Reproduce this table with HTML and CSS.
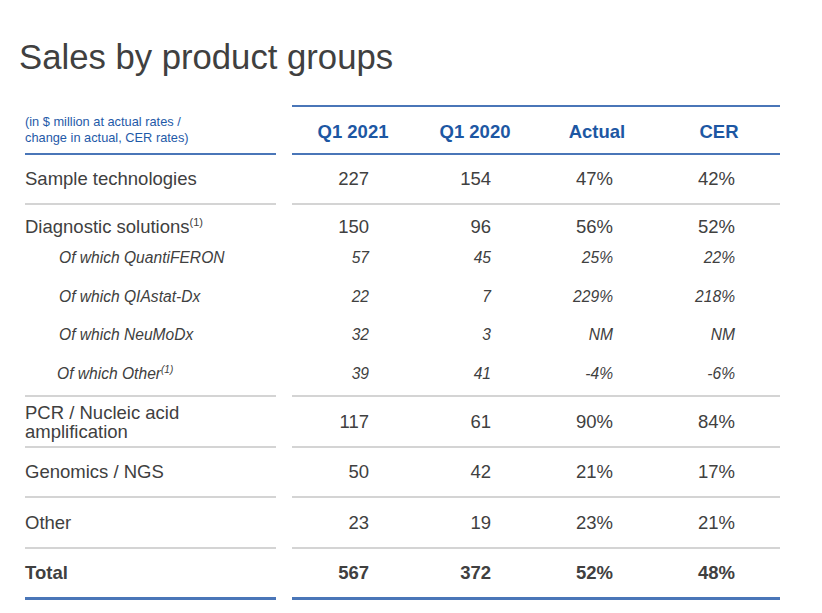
FILE: index.html
```html
<!DOCTYPE html>
<html lang="en">
<head>
<meta charset="utf-8">
<title>Sales by product groups</title>
<link rel="stylesheet" href="styles.css">
</head>
<body>
<div class="slide">
  <h1 class="title">Sales by product groups</h1>
  <div class="table">
    <div class="group head">
      <div class="left"><div class="note">(in $ million at actual rates /<br>change in actual, CER rates)</div></div>
      <div class="right">
        <div class="vals"><span>Q1 2021</span><span>Q1 2020</span><span>Actual</span><span>CER</span></div>
      </div>
    </div>

    <div class="group">
      <div class="left"><div class="line">Sample technologies</div></div>
      <div class="right"><div class="vals line"><span>227</span><span>154</span><span>47%</span><span>42%</span></div></div>
    </div>

    <div class="group diag">
      <div class="left">
        <div class="line main">Diagnostic solutions<sup>(1)</sup></div>
        <div class="line sub">Of which QuantiFERON</div>
        <div class="line sub">Of which QIAstat-Dx</div>
        <div class="line sub">Of which NeuMoDx</div>
        <div class="line sub other">Of which Other<sup>(1)</sup></div>
      </div>
      <div class="right">
        <div class="vals line main"><span>150</span><span>96</span><span>56%</span><span>52%</span></div>
        <div class="vals line sub"><span>57</span><span>45</span><span>25%</span><span>22%</span></div>
        <div class="vals line sub"><span>22</span><span>7</span><span>229%</span><span>218%</span></div>
        <div class="vals line sub"><span>32</span><span>3</span><span>NM</span><span>NM</span></div>
        <div class="vals line sub"><span>39</span><span>41</span><span>-4%</span><span>-6%</span></div>
      </div>
    </div>

    <div class="group tall">
      <div class="left"><div class="line two">PCR / Nucleic acid<br>amplification</div></div>
      <div class="right"><div class="vals line"><span>117</span><span>61</span><span>90%</span><span>84%</span></div></div>
    </div>

    <div class="group">
      <div class="left"><div class="line">Genomics / NGS</div></div>
      <div class="right"><div class="vals line"><span>50</span><span>42</span><span>21%</span><span>17%</span></div></div>
    </div>

    <div class="group tall">
      <div class="left"><div class="line">Other</div></div>
      <div class="right"><div class="vals line"><span>23</span><span>19</span><span>23%</span><span>21%</span></div></div>
    </div>

    <div class="group total">
      <div class="left"><div class="line">Total</div></div>
      <div class="right"><div class="vals line"><span>567</span><span>372</span><span>52%</span><span>48%</span></div></div>
    </div>
  </div>
</div>
</body>
</html>
```

FILE: styles.css
```css
html, body {
  margin: 0;
  padding: 0;
  background: #ffffff;
}

body {
  font-family: "Liberation Sans", Arial, sans-serif;
  color: #404040;
  width: 822px;
  height: 613px;
  overflow: hidden;
}

.slide {
  padding-top: 37px;
}

.title {
  margin: 0 0 28px 19px;
  font-size: 34.7px;
  line-height: 40px;
  font-weight: normal;
  color: #404040;
}

.table {
  margin-left: 25px;
}

.group {
  display: grid;
  grid-template-columns: 251px 488px;
  column-gap: 16px;
}

.left,
.right {
  display: flex;
  flex-direction: column;
  justify-content: center;
  border-bottom: 2px solid #d4d4d4;
  height: 48px;
}

.group.tall .left,
.group.tall .right {
  height: 49px;
}

.head .left,
.head .right {
  border-bottom: 2px solid #4a76b8;
  height: 46px;
}

.head .right {
  border-top: 2px solid #4a76b8;
}

.head .left {
  margin-top: 2px;
}

.note {
  font-size: 12.8px;
  line-height: 15.6px;
  color: #1f5aa8;
}

.vals {
  display: grid;
  grid-template-columns: repeat(4, 122px);
}

.head .vals span {
  text-align: center;
  font-weight: bold;
  font-size: 18.5px;
  color: #1d57a3;
  padding-top: 4px;
}

.line {
  font-size: 18.5px;
  line-height: 22px;
}

.line.two {
  line-height: 19px;
}

.vals.line span {
  text-align: right;
  padding-right: 45px;
}

sup {
  font-size: 11px;
  line-height: 0;
  vertical-align: 7px;
}

.diag .left,
.diag .right {
  justify-content: flex-start;
  padding-top: 9px;
  box-sizing: border-box;
  height: 192px;
}

.diag .line.main {
  line-height: 25px;
  height: 25px;
}

.diag .line.sub {
  height: 38.5px;
  line-height: 38.5px;
  font-size: 15.6px;
  font-style: italic;
}

.diag .left .line.sub {
  padding-left: 34px;
}

.diag .left .line.sub.other {
  padding-left: 32px;
}

.diag .line.sub sup {
  font-size: 10px;
  vertical-align: 6px;
}

.total .line {
  font-weight: bold;
}

.total .left,
.total .right {
  border-bottom: 3px solid #4a76b8;
}
```
